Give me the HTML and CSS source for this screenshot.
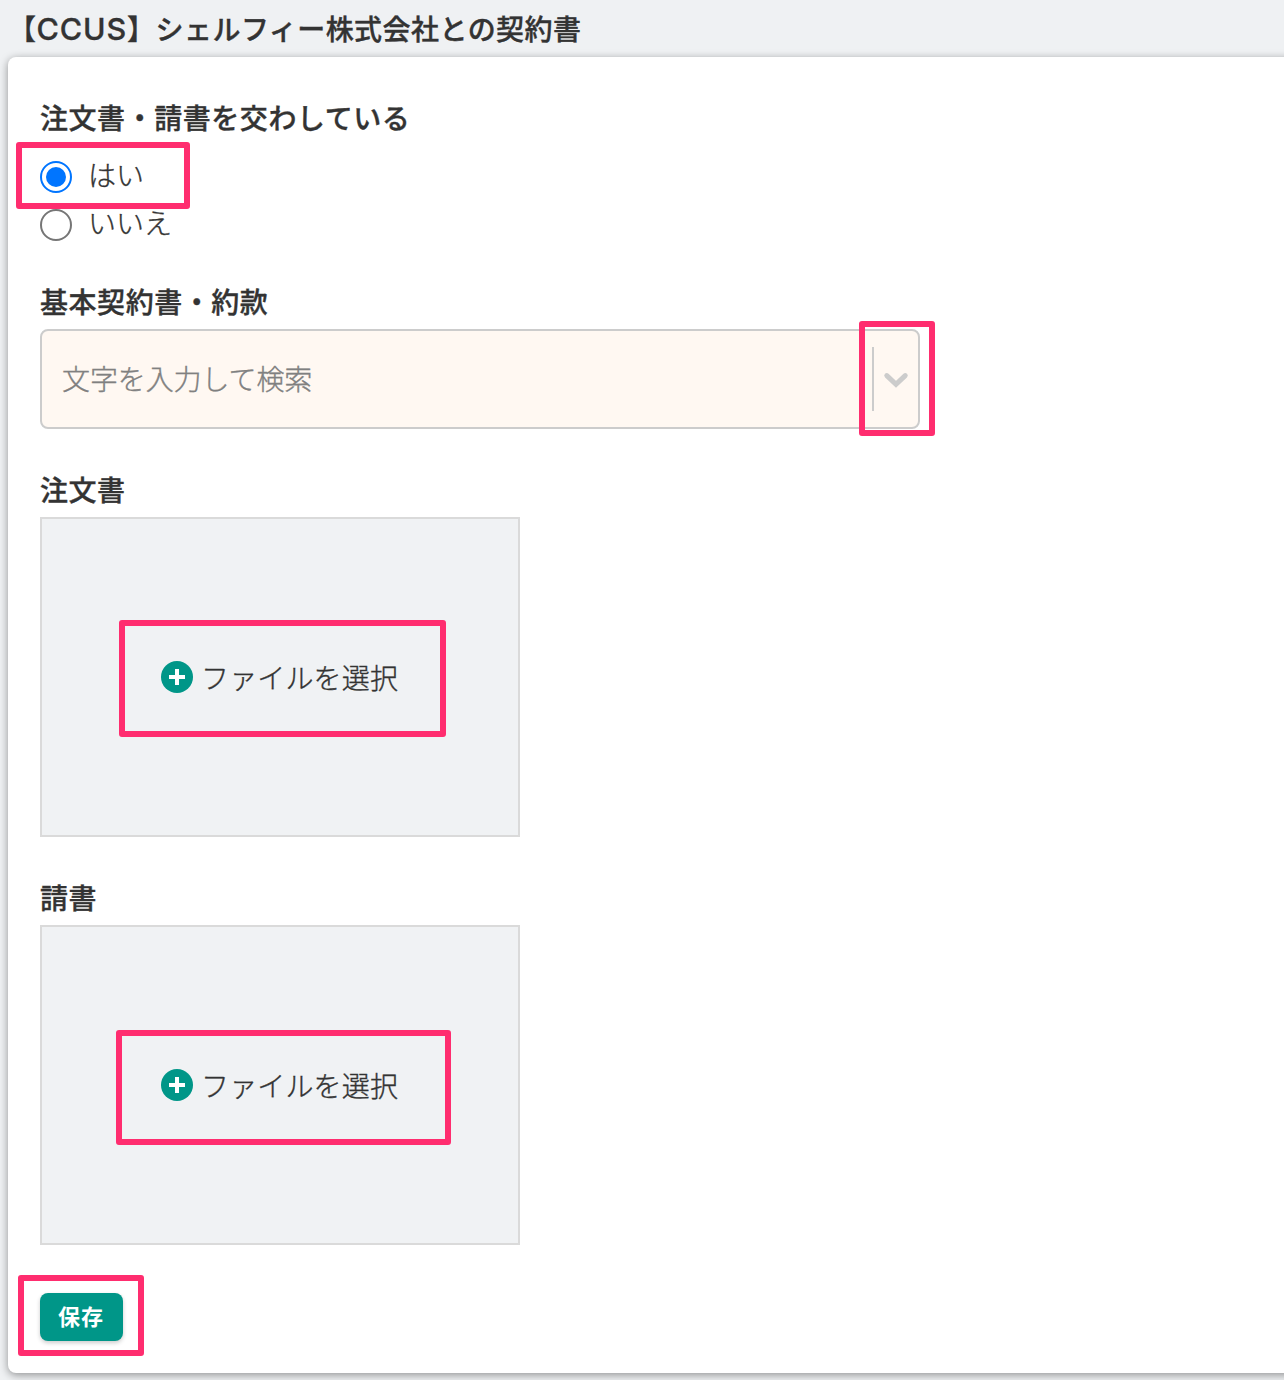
FILE: index.html
```html
<!DOCTYPE html>
<html lang="ja">
<head>
<meta charset="utf-8">
<title>【CCUS】シェルフィー株式会社との契約書</title>
<link rel="stylesheet" href="styles.css">
</head>
<body>
<h1 class="page-title">【<span class="latin">CCUS</span>】シェルフィー株式会社との契約書</h1>
<form class="card">
  <section class="field">
    <h2 class="label">注文書・請書を交わしている</h2>
    <div class="radios">
      <label class="option"><span class="radio radio-on"></span><span>はい</span></label>
      <label class="option"><span class="radio"></span><span>いいえ</span></label>
    </div>
  </section>
  <section class="field">
    <h2 class="label">基本契約書・約款</h2>
    <div class="select">
      <span class="placeholder">文字を入力して検索</span>
      <span class="separator"></span>
      <svg class="chevron" viewBox="0 0 24 14"><path d="M2.8 2.6 12 11.4 21.2 2.6"/></svg>
    </div>
  </section>
  <section class="field">
    <h2 class="label">注文書</h2>
    <div class="upload">
      <svg class="plus" viewBox="0 0 32 32"><circle cx="16" cy="16" r="16"/><path d="M16 8v16M8 16h16"/></svg>
      <span class="upload-text">ファイルを選択</span>
    </div>
  </section>
  <section class="field">
    <h2 class="label">請書</h2>
    <div class="upload">
      <svg class="plus" viewBox="0 0 32 32"><circle cx="16" cy="16" r="16"/><path d="M16 8v16M8 16h16"/></svg>
      <span class="upload-text">ファイルを選択</span>
    </div>
  </section>
  <button class="save" type="button">保存</button>
</form>
<div class="mark mark-yes"></div>
<div class="mark mark-select"></div>
<div class="mark mark-order"></div>
<div class="mark mark-receipt"></div>
<div class="mark mark-save"></div>
</body>
</html>
```

FILE: styles.css
```css
* { box-sizing: border-box; }
body {
  position: relative;
  margin: 0;
  height: 1380px;
  overflow: hidden;
  background: #eff1f3;
  color: #333;
  font-family: Inter, "Noto Sans CJK JP", sans-serif;
  font-size: 28px;
  font-weight: 300;
  -webkit-text-stroke: 0.35px currentColor;
}
.page-title {
  margin: 0;
  height: 57px;
  padding-left: 8px;
  font-size: 28px;
  font-weight: 500;
  line-height: 60px;
  letter-spacing: 0.45px;
  white-space: nowrap;
}
.latin {
  font-size: 30.5px;
  line-height: 1;
  letter-spacing: 0.9px;
}
.card {
  width: 1300px;
  height: 1316px;
  margin-left: 8px;
  padding: 40px 32px 32px;
  background: #fff;
  border-radius: 8px;
  box-shadow: 0 2px 8px rgba(0, 0, 0, 0.4);
}
.field { margin-bottom: 40px; }
.field:first-child { margin-bottom: 32px; }
.label {
  margin: 0;
  height: 48px;
  font-size: 28px;
  font-weight: 500;
  line-height: 44px;
  letter-spacing: 0.55px;
}
.radios { padding-top: 8px; }
.option {
  display: flex;
  align-items: center;
  gap: 16px;
  height: 48px;
  line-height: 46px;
}
.option span:last-child { height: 48px; }
.radio {
  width: 32px;
  height: 32px;
  border: 2px solid #767676;
  border-radius: 50%;
  background: #fff;
}
.radio-on {
  border-color: #0075ff;
  padding: 4px;
  background: #0075ff content-box;
}
.select {
  display: flex;
  align-items: center;
  width: 880px;
  height: 100px;
  padding: 0 10px 0 20px;
  border: 2px solid #ccc;
  border-radius: 8px;
  background: #fff8f2;
}
.placeholder {
  flex: 1;
  padding-bottom: 2px;
  color: #808080;
  letter-spacing: -0.1px;
}
.separator { width: 2px; height: 64px; background: #ccc; }
.chevron {
  width: 24px;
  height: 14px;
  margin: 2px 0 0 10px;
  overflow: visible;
  fill: none;
  stroke: #ccc;
  stroke-width: 5;
  stroke-linecap: round;
}
.upload {
  display: flex;
  align-items: center;
  gap: 8px;
  width: 480px;
  height: 320px;
  padding-left: 119px;
  border: 2px solid #dadada;
  background: #f0f2f4;
}
.upload-text { padding-bottom: 1px; letter-spacing: 0.15px; }
.plus { width: 32px; height: 32px; fill: #009688; }
.plus path { stroke: #fff; stroke-width: 4; }
.save {
  display: block;
  width: 83px;
  height: 48px;
  margin-top: 48px;
  padding: 0 1px 4px 0;
  border: 0;
  border-radius: 8px;
  background: #009688;
  color: #fff;
  font: 700 22px/44px "Noto Sans CJK JP", sans-serif;
  letter-spacing: 1px;
  -webkit-text-stroke: 0;
  box-shadow: 0 2px 4px rgba(0, 0, 0, 0.2);
}
.mark {
  position: absolute;
  border: 6px solid #ff2d6f;
  border-radius: 3px;
}
.mark-yes { left: 16px; top: 142px; width: 174px; height: 67px; }
.mark-select { left: 859px; top: 321px; width: 76px; height: 115px; }
.mark-order { left: 119px; top: 620px; width: 327px; height: 117px; }
.mark-receipt { left: 116px; top: 1030px; width: 335px; height: 115px; }
.mark-save { left: 18px; top: 1275px; width: 126px; height: 81px; }
```
